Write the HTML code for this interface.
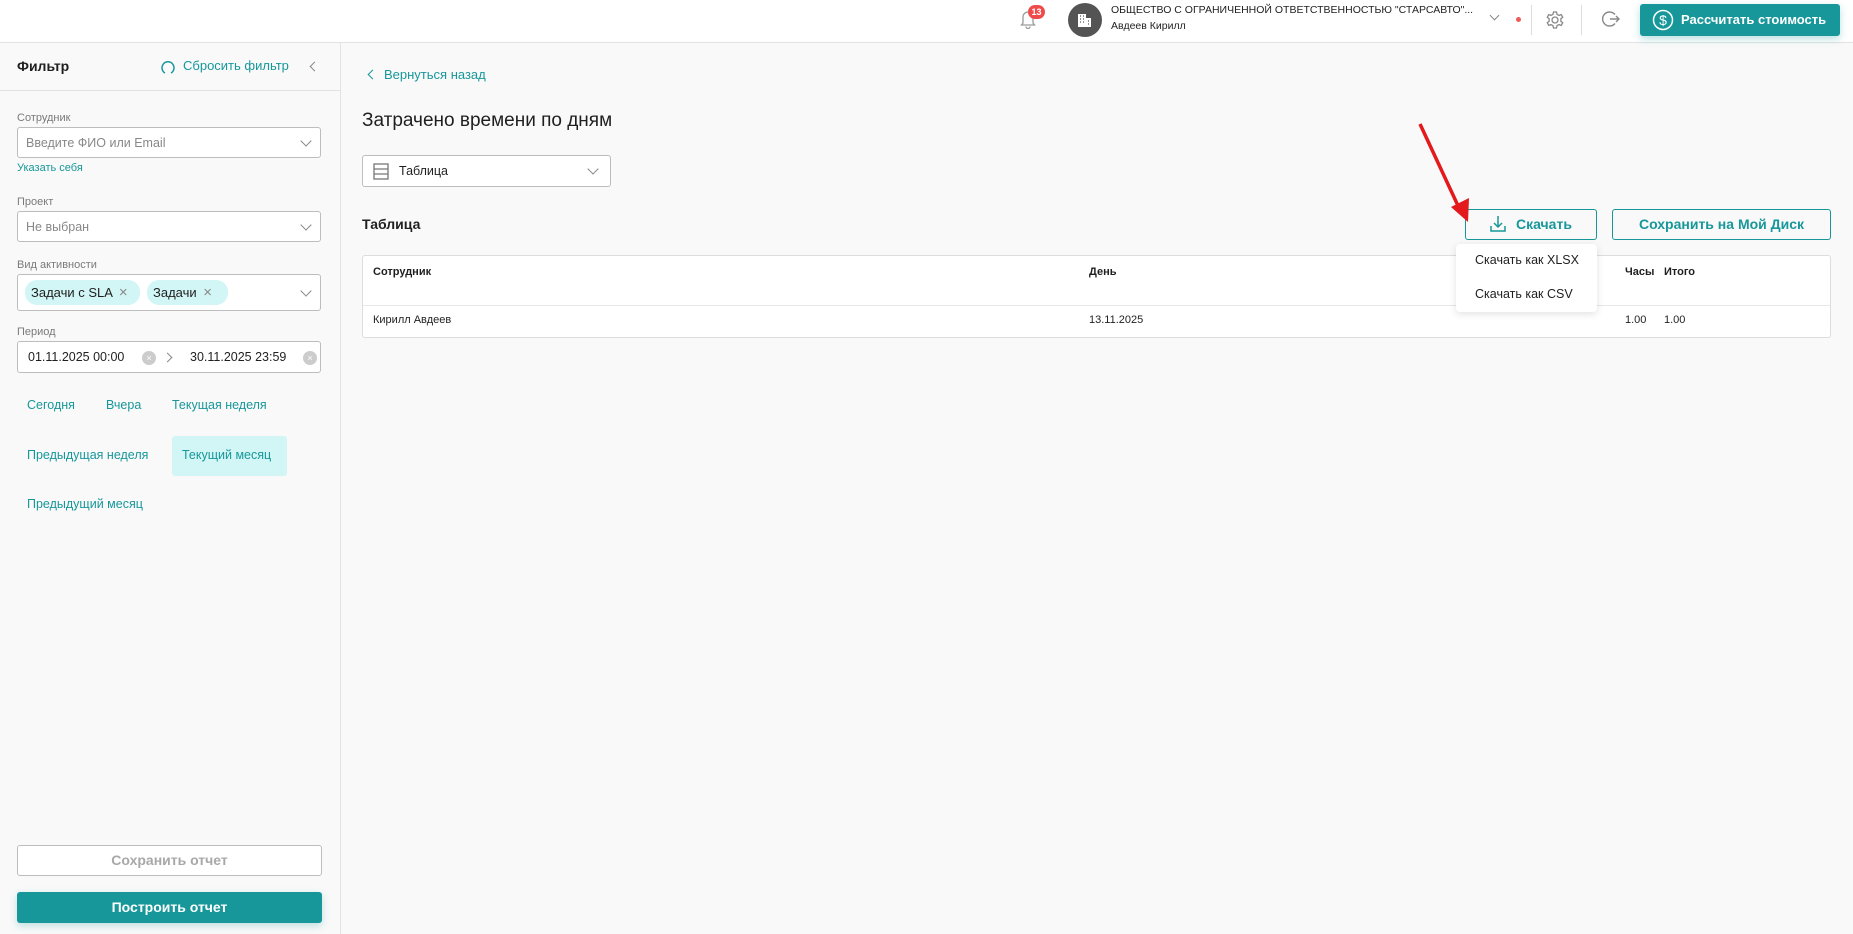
<!DOCTYPE html>
<html><head><meta charset="utf-8"><style>
*{box-sizing:border-box;margin:0;padding:0}
body{width:1853px;height:934px;overflow:hidden;background:#f9f9f9;font-family:"Liberation Sans",sans-serif;color:#1f1f1f;position:relative}
.a{position:absolute;white-space:nowrap}
.teal{color:#17979a}
.lbl{font-size:11px;color:#7a7a7a}
.inp{position:absolute;left:17px;width:304px;background:#fff;border:1px solid #bdbdbd;border-radius:3px}
.ph{font-size:12.5px;color:#888}
.chev{position:absolute;width:8px;height:8px;border-right:1.3px solid #888;border-bottom:1.3px solid #888;transform:rotate(45deg)}
.chip{position:absolute;top:5px;height:25px;background:#d2f5f6;border-radius:12px;font-size:13px;line-height:25px;padding-left:6px}
.q{font-size:12.5px;color:#17979a}
.th{font-size:11px;font-weight:bold}
.td{font-size:11px}
</style></head><body>
<!-- header -->
<div class="a" style="left:0;top:0;width:1853px;height:43px;background:#fff;border-bottom:1px solid #e2e2e2"></div>
<svg class="a" style="left:1019px;top:9px" width="18" height="20" viewBox="0 0 18 20"><path d="M4 14V8a5 5 0 0 1 10 0v6l1.5 2h-13z M7 17.5a2 2 0 0 0 4 0" fill="none" stroke="#999" stroke-width="1.3"/></svg>
<div class="a" style="left:1028px;top:5px;width:17px;height:14px;border-radius:7px;background:#ef4b4b;color:#fff;font-size:9px;font-weight:bold;text-align:center;line-height:14px">13</div>
<div class="a" style="left:1068px;top:3px;width:34px;height:34px;border-radius:50%;background:#545454"></div>
<svg class="a" style="left:1077px;top:12px" width="16" height="16" viewBox="0 0 16 16"><path d="M1 15V2h8v13z M9 6h5v9H9z" fill="#fff"/><path d="M3 4h1M6 4h1M3 7h1M6 7h1M3 10h1M6 10h1M11 9h1M11 12h1" stroke="#545454" stroke-width="1.2"/></svg>
<div class="a" style="left:1111px;top:4px;font-size:10.5px">ОБЩЕСТВО С ОГРАНИЧЕННОЙ ОТВЕТСТВЕННОСТЬЮ "СТАРСАВТО"...</div>
<div class="a" style="left:1111px;top:20px;font-size:10.5px">Авдеев Кирилл</div>
<div class="chev" style="left:1491px;top:12px;width:7px;height:7px"></div>
<div class="a" style="left:1516px;top:17px;width:5px;height:5px;border-radius:50%;background:#ef5b5b"></div>
<div class="a" style="left:1531px;top:5px;width:1px;height:30px;background:#ddd"></div>
<svg class="a" style="left:1545px;top:10px" width="20" height="20" viewBox="0 0 20 20"><circle cx="10" cy="10" r="3" fill="none" stroke="#888" stroke-width="1.3"/><path d="M8.5 2h3l.5 2.3 2 1.1 2.2-.8 1.5 2.6-1.8 1.5v2.6l1.8 1.5-1.5 2.6-2.2-.8-2 1.1-.5 2.3h-3l-.5-2.3-2-1.1-2.2.8-1.5-2.6 1.8-1.5V8.7L2.3 7.2l1.5-2.6 2.2.8 2-1.1z" fill="none" stroke="#888" stroke-width="1.3"/></svg>
<div class="a" style="left:1581px;top:5px;width:1px;height:30px;background:#ddd"></div>
<svg class="a" style="left:1601px;top:9px" width="20" height="20" viewBox="0 0 20 20"><path d="M14 5.5A7 7 0 1 0 14 14.5" fill="none" stroke="#888" stroke-width="1.4"/><path d="M9 10h9M15 7l3 3-3 3" fill="none" stroke="#888" stroke-width="1.4"/></svg>
<div class="a" style="left:1640px;top:4px;width:200px;height:32px;background:#17979a;border-radius:3px;box-shadow:0 3px 8px rgba(23,151,154,.3)"></div>
<svg class="a" style="left:1652px;top:9px" width="22" height="22" viewBox="0 0 22 22"><circle cx="11" cy="11" r="9.5" fill="none" stroke="#fff" stroke-width="1.5"/><text x="11" y="16" font-size="14" fill="#fff" text-anchor="middle" font-family="Liberation Sans">$</text></svg>
<div class="a" style="left:1681px;top:12px;font-size:13px;font-weight:bold;color:#fff">Рассчитать стоимость</div>

<!-- sidebar -->
<div class="a" style="left:340px;top:43px;width:1px;height:891px;background:#e2e2e2"></div>
<div class="a" style="left:0;top:90px;width:340px;height:1px;background:#e2e2e2"></div>
<div class="a" style="left:17px;top:58px;font-size:14px;font-weight:bold">Фильтр</div>
<svg class="a" style="left:160px;top:59px" width="16" height="16" viewBox="0 0 16 16"><path d="M5 14A6 6 0 1 1 11 14" fill="none" stroke="#17979a" stroke-width="1.5"/></svg>
<div class="a teal" style="left:183px;top:58px;font-size:13px">Сбросить фильтр</div>
<div class="chev" style="left:311px;top:63px;width:7px;height:7px;transform:rotate(135deg)"></div>
<div class="a lbl" style="left:17px;top:112px">Сотрудник</div>
<div class="inp" style="top:127px;height:31px"><span class="a ph" style="left:8px;top:8px">Введите ФИО или Email</span><div class="chev" style="left:284px;top:9px"></div></div>
<div class="a teal" style="left:17px;top:162px;font-size:11px">Указать себя</div>
<div class="a lbl" style="left:17px;top:196px">Проект</div>
<div class="inp" style="top:211px;height:31px"><span class="a ph" style="left:8px;top:8px">Не выбран</span><div class="chev" style="left:284px;top:9px"></div></div>
<div class="a lbl" style="left:17px;top:259px">Вид активности</div>
<div class="inp" style="top:274px;height:37px">
<div class="chip" style="left:7px;width:115px">Задачи с SLA <span style="color:#888;font-size:15px;margin-left:3px">×</span></div>
<div class="chip" style="left:129px;width:81px">Задачи <span style="color:#888;font-size:15px;margin-left:3px">×</span></div>
<div class="chev" style="left:284px;top:12px"></div></div>
<div class="a lbl" style="left:17px;top:326px">Период</div>
<div class="inp" style="top:341px;height:32px">
<span class="a" style="left:10px;top:8px;font-size:12.5px">01.11.2025 00:00</span>
<span class="a" style="left:124px;top:9px;width:14px;height:14px;border-radius:50%;background:#ccc;color:#fff;font-size:9px;text-align:center;line-height:14px">×</span>
<div class="chev" style="left:146px;top:12px;width:7px;height:7px;transform:rotate(-45deg)"></div>
<span class="a" style="left:172px;top:8px;font-size:12.5px">30.11.2025 23:59</span>
<span class="a" style="left:285px;top:9px;width:14px;height:14px;border-radius:50%;background:#ccc;color:#fff;font-size:9px;text-align:center;line-height:14px">×</span>
</div>
<div class="a q" style="left:27px;top:398px">Сегодня</div>
<div class="a q" style="left:106px;top:398px">Вчера</div>
<div class="a q" style="left:172px;top:398px">Текущая неделя</div>
<div class="a q" style="left:27px;top:448px">Предыдущая неделя</div>
<div class="a" style="left:172px;top:436px;width:115px;height:40px;background:#d2f5f6;border-radius:3px"></div>
<div class="a q" style="left:182px;top:448px">Текущий месяц</div>
<div class="a q" style="left:27px;top:497px">Предыдущий месяц</div>
<div class="a" style="left:17px;top:845px;width:305px;height:31px;background:#fff;border:1px solid #bdbdbd;border-radius:3px;text-align:center;font-size:14px;font-weight:bold;color:#a8a8a8;line-height:29px">Сохранить отчет</div>
<div class="a" style="left:17px;top:892px;width:305px;height:31px;background:#17979a;border-radius:3px;text-align:center;font-size:14px;font-weight:bold;color:#fff;line-height:31px;box-shadow:0 3px 8px rgba(23,151,154,.25)">Построить отчет</div>

<!-- main -->
<div class="chev" style="left:369px;top:71px;width:7px;height:7px;border-color:#17979a;transform:rotate(135deg)"></div>
<div class="a teal" style="left:384px;top:67px;font-size:13px">Вернуться назад</div>
<div class="a" style="left:362px;top:110px;font-size:19px">Затрачено времени по дням</div>
<div class="a" style="left:362px;top:155px;width:249px;height:32px;background:#fff;border:1px solid #bdbdbd;border-radius:3px">
<svg class="a" style="left:10px;top:7px" width="16" height="17" viewBox="0 0 16 17"><rect x="1" y="1" width="14" height="15" fill="none" stroke="#777" stroke-width="1.3"/><path d="M1 6h14M1 11h14" stroke="#777" stroke-width="1.3"/></svg>
<span class="a" style="left:36px;top:8px;font-size:12.5px">Таблица</span><div class="chev" style="left:226px;top:9px"></div></div>
<div class="a" style="left:362px;top:216px;font-size:14px;font-weight:bold">Таблица</div>
<div class="a" style="left:1465px;top:209px;width:132px;height:31px;border:1px solid #17979a;border-radius:3px;background:#f9f9f9"></div>
<svg class="a" style="left:1489px;top:215px" width="18" height="18" viewBox="0 0 18 18"><path d="M9 1v11M5 8l4 4 4-4M2 11v5h14v-5" fill="none" stroke="#17979a" stroke-width="1.5"/></svg>
<div class="a teal" style="left:1516px;top:216px;font-size:14px;font-weight:bold">Скачать</div>
<div class="a" style="left:1612px;top:209px;width:219px;height:31px;border:1px solid #17979a;border-radius:3px;text-align:center;line-height:29px;font-size:14px;font-weight:bold;color:#17979a">Сохранить на Мой Диск</div>
<div class="a" style="left:362px;top:255px;width:1469px;height:83px;background:#fff;border:1px solid #ddd;border-radius:3px"></div>
<div class="a" style="left:363px;top:305px;width:1467px;height:1px;background:#e8e8e8"></div>
<div class="a th" style="left:373px;top:266px">Сотрудник</div>
<div class="a th" style="left:1089px;top:266px">День</div>
<div class="a th" style="left:1625px;top:266px">Часы</div>
<div class="a th" style="left:1664px;top:266px">Итого</div>
<div class="a td" style="left:373px;top:314px">Кирилл Авдеев</div>
<div class="a td" style="left:1089px;top:314px">13.11.2025</div>
<div class="a td" style="left:1625px;top:314px">1.00</div>
<div class="a td" style="left:1664px;top:314px">1.00</div>
<div class="a" style="left:1456px;top:244px;width:141px;height:68px;background:#fff;border-radius:4px;box-shadow:0 2px 8px rgba(0,0,0,.12)"></div>
<div class="a" style="left:1475px;top:253px;font-size:12.5px">Скачать как XLSX</div>
<div class="a" style="left:1475px;top:287px;font-size:12.5px">Скачать как CSV</div>
<svg class="a" style="left:1400px;top:110px" width="90" height="120" viewBox="0 0 90 120"><path d="M20 14L60 100" stroke="#e3191b" stroke-width="3.5"/><path d="M51 97l17 15 1-24z" fill="#e3191b"/></svg>
</body></html>
